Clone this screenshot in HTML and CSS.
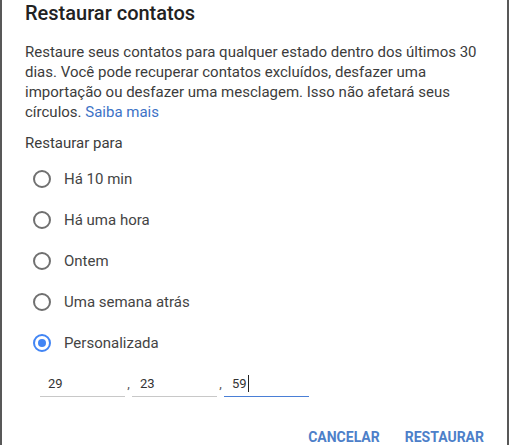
FILE: index.html
```html
<!DOCTYPE html>
<html lang="pt">
<head>
<meta charset="utf-8">
<link rel="stylesheet" href="styles.css">
</head>
<body>
<div class="dialog">
  <h1 class="title">Restaurar contatos</h1>
  <p class="desc">Restaure seus contatos para qualquer estado dentro dos últimos 30 dias. Você pode recuperar contatos excluídos, desfazer uma importação ou desfazer uma mesclagem. Isso não afetará seus círculos. <a class="link" href="#">Saiba mais</a></p>
  <div class="label">Restaurar para</div>
  <div class="options">
    <div class="opt"><span class="radio"></span><span>Há 10 min</span></div>
    <div class="opt"><span class="radio"></span><span>Há uma hora</span></div>
    <div class="opt"><span class="radio"></span><span>Ontem</span></div>
    <div class="opt"><span class="radio"></span><span>Uma semana atrás</span></div>
    <div class="opt"><span class="radio checked"></span><span>Personalizada</span></div>
  </div>
  <div class="inputs">
    <div class="field">29</div>
    <span class="sep">,</span>
    <div class="field">23</div>
    <span class="sep">,</span>
    <div class="field active">59<span class="caret"></span></div>
  </div>
  <div class="actions">
    <button class="btn">CANCELAR</button>
    <button class="btn">RESTAURAR</button>
  </div>
</div>
</body>
</html>
```

FILE: styles.css
```css
html, body {
  margin: 0;
  padding: 0;
  background: #fff;
}
body {
  font-family: Roboto, "Liberation Sans", sans-serif;
  color: #3c3c3c;
}
.dialog {
  width: 509px;
  height: 445px;
  border-left: 2px solid #585858;
  border-right: 2px solid #585858;
  padding: 0 0 0 23px;
  box-sizing: border-box;
  background: #fff;
  overflow: hidden;
}
.title {
  margin: 0;
  padding-top: 1px;
  font-size: 20px;
  font-weight: 500;
  line-height: 24px;
  color: #222;
}
.desc {
  margin: 17px 0 0 0;
  font-size: 15px;
  line-height: 20px;
  color: #3c3c3c;
  width: 470px;
}
.link {
  color: #3d72c6;
  text-decoration: none;
}
.label {
  margin-top: 11px;
  font-size: 15px;
  line-height: 20px;
  color: #3c3c3c;
}
.options {
  display: flex;
  flex-direction: column;
  margin-top: 16px;
  gap: 21px;
}
.opt {
  display: flex;
  align-items: center;
  height: 20px;
  font-size: 15px;
  color: #444;
  padding-left: 8px;
}
.radio {
  border: 2px solid #707070;
  border-radius: 50%;
  box-sizing: border-box;
  margin-right: 13px;
  flex: none;
  width: 18px;
  height: 18px;
  position: relative;
}
.radio.checked {
  border-color: #4285f4;
}
.radio.checked::after {
  content: "";
  position: absolute;
  left: 3px;
  top: 3px;
  width: 8px;
  height: 8px;
  border-radius: 50%;
  background: #4285f4;
}
.inputs {
  display: flex;
  align-items: flex-end;
  margin-top: 18px;
  padding-left: 15px;
}
.field {
  width: 85px;
  height: 26px;
  box-sizing: border-box;
  border-bottom: 1px solid #c8c8c8;
  font-size: 13px;
  line-height: 20px;
  padding: 3px 0 0 8px;
  color: #333;
  display: flex;
  align-items: flex-start;
}
.field.active {
  border-bottom: 1px solid #4a7fd6;
}
.caret {
  display: inline-block;
  width: 1px;
  height: 17px;
  background: #222;
  margin-left: 1px;
  margin-top: 1px;
}
.sep {
  width: 7px;
  font-size: 13px;
  color: #555;
  line-height: 20px;
  padding-bottom: 3px;
  text-align: center;
}
.actions {
  display: flex;
  justify-content: flex-end;
  gap: 25px;
  margin-top: 32px;
  padding-right: 23px;
}
.btn {
  background: none;
  border: none;
  padding: 0;
  font-family: Roboto, "Liberation Sans", sans-serif;
  font-size: 14px;
  font-weight: 700;
  color: #4d80c9;
  line-height: 16px;
}
```
